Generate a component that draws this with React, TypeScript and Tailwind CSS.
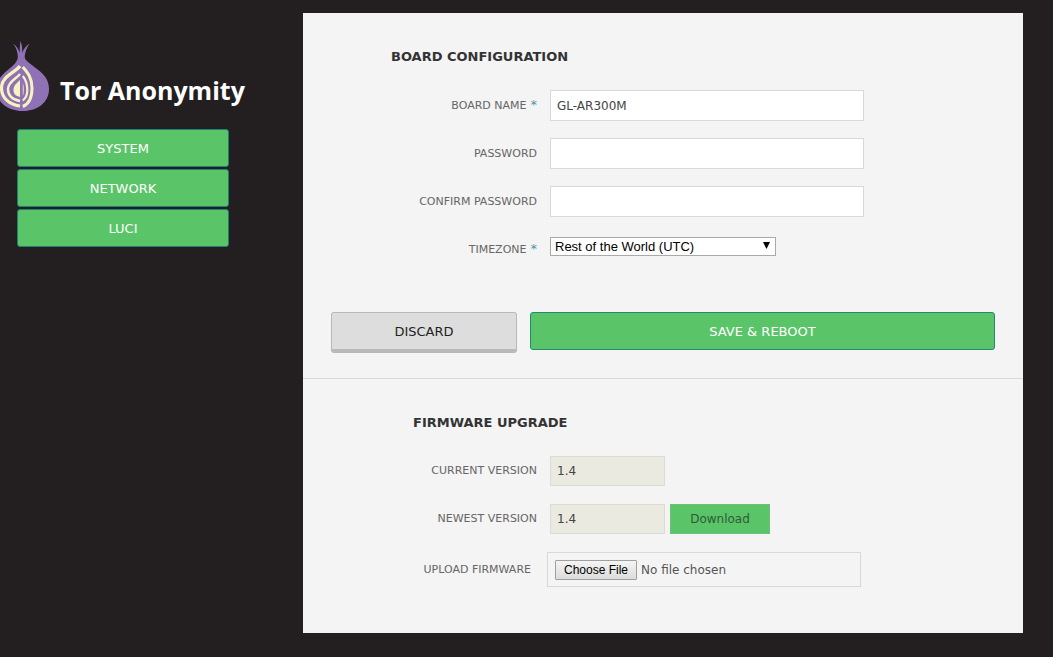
import React from "react";

const navItems = ["SYSTEM", "NETWORK", "LUCI"];

const labelClass = "w-[234px] shrink-0 text-right text-[11px] leading-4 text-[#666]";
const fieldClass = "h-[31px] w-[314px] border border-[#d8d8d8] bg-white px-[6px] text-[12px] text-[#444] outline-none";
const readonlyClass = "h-[30px] w-[115px] border border-[#dcdcd4] bg-[#eaeae1] px-[6px] text-[12px] text-[#444] outline-none";

function OnionLogo() {
  return (
    <svg width="50" height="70" viewBox="0 0 50 70" className="shrink-0" aria-hidden="true">
      <g fill="#8f72b5">
        <path d="M24 15C25 20 31 23 37 28C44 33 49 39 49 48C49 61 38 70 23 70C8 70 -4 61 -4 48C-4 39 3 33 9 28C14 24 18 20 18 15Z" />
        <path d="M18 18C18 11 16 6 13 2.500C16.500 5 18.500 8 19.800 12C19.500 8 20 4 20.500 0C22 4 22.500 8 22.200 12C23.500 8 26 5 29.500 2.500C26.500 7 24.500 12 24.500 18Z" />
      </g>
      <g fill="none" stroke="#f7f3c0">
        <path strokeWidth="3.200" d="M20 25C16 31 1.500 35 1.500 47C1.500 57 9 63.500 20 65" />
        <path strokeWidth="2.400" d="M20 33C16 38 8 41 8 48C8 55 12 58.500 20 60" />
        <path strokeWidth="3" d="M22.800 26C28 32 32 37 32 47C32 56 29 63 22.800 65.500" />
        <path strokeWidth="2.200" d="M22.800 35C26 39 27.300 43 27.300 49C27.300 54 26 57 22.800 59.500" />
      </g>
      <path d="M20 39C17 42 13.500 44 13.500 49C13.500 53 16 55 20 56Z" fill="#f7f3c0" />
      <path d="M22.800 42C24 45 24 52 22.800 55Z" fill="#f7f3c0" />
    </svg>
  );
}

function Required() {
  return <span className="ml-1 text-[13px] text-[#4f9a98]">*</span>;
}

export default function App() {
  return (
    <div className="flex min-h-screen items-start bg-[#231f20] font-['DejaVu_Sans',sans-serif]">
      <aside className="w-[303px] shrink-0 pt-[41px]">
        <header className="flex items-start gap-[10px]">
          <OnionLogo />
          <h1 className="pt-[31px] font-['Open_Sans',sans-serif] text-[25px] leading-9 font-bold text-white">
            Tor Anonymity
          </h1>
        </header>
        <nav className="mt-[18px] ml-[17px] flex w-[212px] flex-col gap-[2px]">
          {navItems.map((item) => (
            <a
              key={item}
              href="#"
              className="flex h-[38px] items-center justify-center rounded-[3px] border border-[#1f7f74] bg-[#5ac568] pt-[2px] text-[13px] text-white"
            >
              {item}
            </a>
          ))}
        </nav>
      </aside>

      <main className="mt-[13px] mr-[30px] mb-[24px] min-w-0 flex-1 bg-[#f4f4f4]">
        <form className="border-b border-[#d9d9d9] pt-[34px] pb-[25px]" onSubmit={(e) => e.preventDefault()}>
          <h2 className="ml-[88px] text-[13px] leading-5 font-bold text-[#333]">BOARD CONFIGURATION</h2>
          <div className="mt-[23px] flex flex-col gap-[17px]">
            <div className="flex items-center gap-[13px]">
              <label htmlFor="board" className={labelClass}>BOARD NAME<Required /></label>
              <input id="board" className={fieldClass} defaultValue="GL-AR300M" />
            </div>
            <div className="flex items-center gap-[13px]">
              <label htmlFor="password" className={labelClass}>PASSWORD</label>
              <input id="password" type="password" className={fieldClass} />
            </div>
            <div className="flex items-center gap-[13px]">
              <label htmlFor="confirm" className={labelClass}>CONFIRM PASSWORD</label>
              <input id="confirm" type="password" className={fieldClass} />
            </div>
            <div className="flex items-start gap-[13px] pt-[3px]">
              <label htmlFor="timezone" className="w-[234px] shrink-0 text-right text-[11px] leading-6 text-[#666]">TIMEZONE<Required /></label>
              <div className="relative">
                <select
                  id="timezone"
                  className="block h-[19px] w-[226px] appearance-none border border-[#a9a9a9] bg-white pl-[4px] font-['Liberation_Sans',sans-serif] text-[13px] leading-4 text-black"
                >
                  <option>Rest of the World (UTC)</option>
                </select>
                <svg width="7" height="7" viewBox="0 0 7 7" className="pointer-events-none absolute top-[5px] right-[6px]" aria-hidden="true">
                  <path d="M0 0H7L3.500 7Z" fill="#000" />
                </svg>
              </div>
            </div>
          </div>
          <div className="mx-[28px] mt-[50px] flex items-start gap-[13px]">
            <button type="button" className="h-[41px] w-[186px] rounded-[3px] border border-b-4 border-[#b9b9b9] bg-[#dddddd] pt-[2px] text-[13px] text-[#222]">
              DISCARD
            </button>
            <button type="submit" className="h-[38px] flex-1 rounded-[3px] border border-[#238a70] bg-[#5ac568] pt-[2px] text-[13px] text-white">
              SAVE &amp; REBOOT
            </button>
          </div>
        </form>

        <section className="pt-[34px] pb-[46px]">
          <h2 className="ml-[110px] text-[13px] leading-5 font-bold text-[#333]">FIRMWARE UPGRADE</h2>
          <div className="mt-[23px] flex flex-col gap-[18px]">
            <div className="flex items-center gap-[13px]">
              <label htmlFor="current" className={labelClass}>CURRENT VERSION</label>
              <input id="current" readOnly className={readonlyClass} defaultValue="1.4" />
            </div>
            <div className="flex items-center gap-[13px]">
              <label htmlFor="newest" className={labelClass}>NEWEST VERSION</label>
              <div className="flex items-center gap-[5px]">
                <input id="newest" readOnly className={readonlyClass} defaultValue="1.4" />
                <button type="button" className="h-[30px] w-[100px] border border-[#6fbf7a] bg-[#5ac568] text-[12px] text-[#2f5a38]">
                  Download
                </button>
              </div>
            </div>
            <div className="flex items-center gap-[16px]">
              <label htmlFor="firmware" className="w-[228px] shrink-0 text-right text-[11px] leading-4 text-[#666]">UPLOAD FIRMWARE</label>
              <input
                id="firmware"
                type="file"
                className="h-[35px] w-[314px] border border-[#d8d8d8] px-[7px] py-[7px] text-[12px] leading-5 text-[#555] file:mr-1 file:h-[20px] file:w-[82px] file:rounded-[1px] file:border file:border-[#a0a0a0] file:bg-linear-to-b file:from-[#f4f4f4] file:to-[#dcdcdc] file:p-0 file:font-['Liberation_Sans',sans-serif] file:text-[12px] file:leading-4 file:text-black"
              />
            </div>
          </div>
        </section>
      </main>
    </div>
  );
}
